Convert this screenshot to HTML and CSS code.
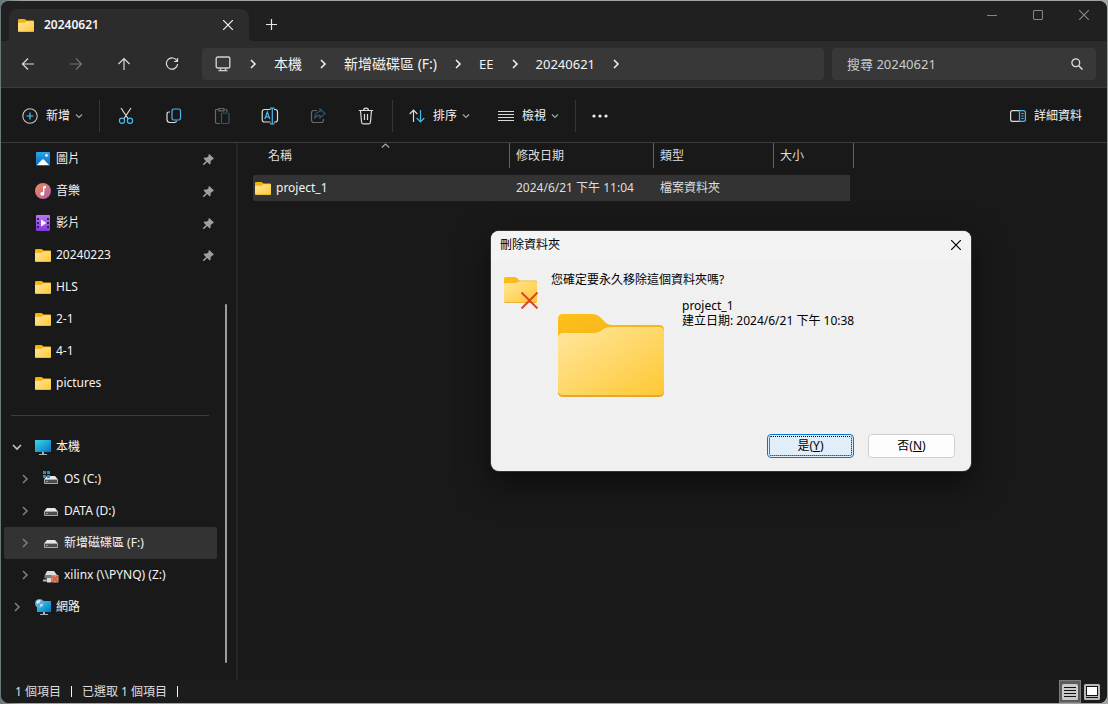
FILE: index.html
```html
<!DOCTYPE html>
<html lang="zh-Hant">
<head>
<meta charset="utf-8">
<title>20240621</title>
<link rel="stylesheet" href="styles.css">
</head>
<body>
<svg class="defs" aria-hidden="true">
  <defs>
    <linearGradient id="gFolder" x1="0" y1="0" x2="1" y2="1"><stop offset="0" stop-color="#ffe79f"/><stop offset="1" stop-color="#ffc833"/></linearGradient>
    <linearGradient id="gTab" x1="0" y1="0" x2="1" y2="1"><stop offset="0" stop-color="#ffc01a"/><stop offset="1" stop-color="#efb020"/></linearGradient>
    <linearGradient id="gScreen" x1="0" y1="0" x2="1" y2="1"><stop offset="0" stop-color="#35dbe8"/><stop offset="1" stop-color="#0a6fc4"/></linearGradient>
    <linearGradient id="gPicture" x1="0" y1="0" x2="0" y2="1"><stop offset="0" stop-color="#2ba4ea"/><stop offset="1" stop-color="#0b66b8"/></linearGradient>
    <linearGradient id="gMusic" x1="0" y1="0" x2="1" y2="1"><stop offset="0" stop-color="#f58c55"/><stop offset="1" stop-color="#a85fb0"/></linearGradient>
    <linearGradient id="gVideo" x1="0" y1="0" x2="0" y2="1"><stop offset="0" stop-color="#b877f2"/><stop offset="1" stop-color="#8038d8"/></linearGradient>
    <symbol id="folder" viewBox="0 0 16 13"><path d="M0 4V1.2Q0 0 1.2 0H6Q6.800 0 7.400.6L8.500 1.600H15Q16 1.600 16 2.600V5H0z" fill="#f5b20c"/><path d="M0 4.600Q0 3.800.8 3.800H6.500L8.500 2.200H15.200Q16 2.200 16 3V12Q16 13 15 13H1Q0 13 0 12z" fill="url(#gFolder)"/><path d="M0 11.800Q0 12.600 1 12.600H15Q16 12.600 16 11.800V12.200Q16 13 15 13H1Q0 13 0 12.200z" fill="#e0a12a"/></symbol>
    <symbol id="big-folder" viewBox="0 0 106 83"><path d="M0 22V5Q0 0 5 0H34Q39 0 42.500 3.500L48 9Q50.500 11 54 11H101Q106 11 106 16V30H0z" fill="url(#gTab)"/><path d="M0 25Q0 19 5 19H34Q40 19 44 16L47 14Q49 13 53 13H101Q106 13 106 18V78Q106 83 101 83H5Q0 83 0 78z" fill="#e5a82d"/><path d="M0 24Q0 19 5 19H34Q40 19 44 16L47 14Q49 13 53 13H101Q106 13 106 18V76Q106 81 101 81H5Q0 81 0 76z" fill="url(#gFolder)"/></symbol>
    <symbol id="drive" viewBox="0 0 16 16"><path d="M4 5H12L15 8.500H1z" fill="#e8e8e8"/><rect x="1" y="8" width="14" height="5" rx=".8" fill="#a6a8aa"/><rect x="2" y="9" width="12" height="3" fill="#4a4d4f"/><rect x="3" y="10" width="2" height="1" fill="#36e04c"/></symbol>
    <symbol id="pin" viewBox="0 0 11 11"><path d="M6.200 0 11 4.600 9.800 5.600 9.200 5.400 7.600 7.200V9.600L6.700 10.400 4.200 8 1 11H0V10L3 6.900.6 4.500 1.500 3.500H4L5.700 1.900 5.300 1z" fill="#98a1a8"/></symbol>
    <symbol id="crumb" viewBox="0 0 8 10"><path d="M2 1 6 5 2 9" fill="none" stroke="currentColor" stroke-width="1.500"/></symbol>
    <symbol id="down" viewBox="0 0 8 6"><path d="M1 1.500 4 4.500 7 1.500" fill="none" stroke="#a4a4a4" stroke-width="1.200"/></symbol>
    <symbol id="x" viewBox="0 0 10 10"><path d="M0 0 10 10M10 0 0 10" fill="none" stroke="currentColor" stroke-width="1.200"/></symbol>
    <symbol id="monitor" viewBox="0 0 16 16"><rect x="0" y="1" width="16" height="12" rx="0" fill="url(#gScreen)"/><path d="M7 13H9V15H12V16H4V15H7z" fill="#aab4be"/></symbol>
  </defs>
</svg>
<div class="window">
  <header class="titlebar">
    <div class="tab">
      <svg class="folder-icon"><use href="#folder"/></svg>
      <span class="tab-title">20240621</span>
      <button class="tab-close" aria-label="關閉索引標籤"><svg width="10" height="10"><use href="#x"/></svg></button>
    </div>
    <button class="new-tab" aria-label="新增索引標籤"><svg width="11" height="11" viewBox="0 0 11 11"><path d="M5.500 0V11M0 5.500H11" stroke="#e6e6e6" stroke-width="1.200"/></svg></button>
    <div class="window-buttons">
      <button aria-label="最小化"><svg width="10" height="10"><path d="M0 5.500H10" stroke="currentColor"/></svg></button>
      <button aria-label="最大化"><svg width="10" height="10"><rect x=".5" y=".5" width="9" height="9" rx=".5" fill="none" stroke="currentColor"/></svg></button>
      <button aria-label="關閉"><svg width="10" height="10"><use href="#x"/></svg></button>
    </div>
  </header>

  <div class="navbar">
    <div class="nav-buttons">
      <button aria-label="上一頁"><svg width="14" height="14" viewBox="0 0 14 14"><path d="M7 1.500 1.500 7 7 12.500M1.500 7H13" class="line"/></svg></button>
      <button aria-label="下一頁" disabled><svg width="14" height="14" viewBox="0 0 14 14"><path d="M7 1.500 12.500 7 7 12.500M12.500 7H1" class="line"/></svg></button>
      <button aria-label="上一層"><svg width="14" height="14" viewBox="0 0 14 14"><path d="M1.500 7 7 1.500 12.500 7M7 1.500V13" class="line"/></svg></button>
      <button aria-label="重新整理"><svg width="14" height="14" viewBox="0 0 14 14"><path d="M12 4A5.600 5.600 0 1 0 12.600 7M12.500 1V4.500H9" class="line"/></svg></button>
    </div>
    <nav class="address" aria-label="路徑">
      <svg width="16" height="16" viewBox="0 0 16 16"><rect x="1.200" y="1" width="13.600" height="11" rx="1.500" fill="none" stroke="#cfcfcf" stroke-width="1.400"/><path d="M5.500 12V14.500M10.500 12V14.500M3.500 14.700H12.500" stroke="#cfcfcf" stroke-width="1.300"/></svg>
      <svg class="crumb"><use href="#crumb"/></svg>
      <a href="#">本機</a>
      <svg class="crumb"><use href="#crumb"/></svg>
      <a href="#">新增磁碟區 (F:)</a>
      <svg class="crumb"><use href="#crumb"/></svg>
      <a href="#" class="latin">EE</a>
      <svg class="crumb"><use href="#crumb"/></svg>
      <a href="#" class="latin">20240621</a>
      <svg class="crumb"><use href="#crumb"/></svg>
    </nav>
    <div class="search">
      <input type="text" aria-label="搜尋 20240621" placeholder="搜尋 20240621">
      <button aria-label="搜尋"><svg width="12" height="12" viewBox="0 0 12 12"><circle cx="4.800" cy="4.800" r="3.900" fill="none" stroke="#dedede" stroke-width="1.300"/><path d="M7.700 7.700 11.500 11.500" stroke="#dedede" stroke-width="1.500"/></svg></button>
    </div>
  </div>

  <div class="toolbar">
    <button class="tool"><svg width="16" height="16" viewBox="0 0 16 16"><circle cx="8" cy="8" r="7.200" fill="none" stroke="#c8c8c8" stroke-width="1.100"/><path d="M8 4.500V11.500M4.500 8H11.500" stroke="#4cc2ff" stroke-width="1.200"/></svg><span>新增</span><svg class="down"><use href="#down"/></svg></button>
    <span class="divider"></span>
    <div class="icon-tools">
      <button aria-label="剪下"><svg width="16" height="18" viewBox="0 0 16 18"><path d="M3 1 10.300 12M13 1 5.700 12" class="line"/><circle cx="4" cy="13.800" r="2.600" class="blue"/><circle cx="12" cy="13.800" r="2.600" class="blue"/></svg></button>
      <button aria-label="複製"><svg width="16" height="16" viewBox="0 0 16 16"><path d="M4 4H3Q1 4 1 6V11.500Q1 14.500 4 14.500H8.500Q10.300 14.500 10.500 12.800" class="line"/><rect x="6" y="1" width="8.500" height="11" rx="1.800" class="blue"/></svg></button>
      <button aria-label="貼上" disabled><svg width="16" height="18" viewBox="0 0 16 18"><path d="M5 2.500H2.500Q1.500 2.500 1.500 3.500V15Q1.500 16.500 3 16.500H6M11 2.500H12Q13 2.500 13 3.500V5M5 1.500H10V3.800H5z" class="line"/><rect x="7.500" y="6" width="7.500" height="10.500" rx="1" class="blue"/></svg></button>
      <button aria-label="重新命名"><svg width="18" height="18" viewBox="0 0 18 18"><path d="M9.500 2.500H3.500Q1.200 2.500 1.200 5V12.500Q1.200 15 3.500 15H9.500M13 2.500H14.500Q16.500 2.500 16.500 5V12.500Q16.500 15 14.500 15H13" class="line"/><path d="M3.800 12 6.300 5 8.800 12M4.600 9.800H8M9 1.200H13.500M9 16.800H13.500M11.300 1.200V16.800" class="blue"/></svg></button>
      <button aria-label="共用" disabled><svg width="16" height="16" viewBox="0 0 16 16"><path d="M7 2.500H4Q1.500 2.500 1.500 5V12Q1.500 14.500 4 14.500H11Q13.500 14.500 13.500 12V11" class="line"/><path d="M10 1 15 5.500 10 10V7.500Q6.500 7 4.500 10.500 5 4 10 3.500z" class="blue"/></svg></button>
      <button aria-label="刪除"><svg width="16" height="18" viewBox="0 0 16 18"><path d="M.8 3.500H15.200M2.500 3.500 3.600 15.500Q3.800 16.800 5 16.800H11Q12.200 16.800 12.400 15.500L13.500 3.500M5.500 3.300Q5.700 1.200 8 1.200T10.500 3.300M6.500 7V13M9.500 7V13" class="line"/></svg></button>
    </div>
    <span class="divider"></span>
    <button class="tool sort"><svg width="16" height="14" viewBox="0 0 16 14"><path d="M4.500 13V1M.7 5 4.500 1 8.300 5" class="line"/><path d="M11.500 1V13M7.700 9 11.500 13 15.300 9" class="blue"/></svg><span>排序</span><svg class="down"><use href="#down"/></svg></button>
    <button class="tool view"><svg width="16" height="12" viewBox="0 0 16 12"><path d="M0 1.500H16M0 4.500H16M0 7.500H16M0 10.500H16" stroke="#d8d8d8"/></svg><span>檢視</span><svg class="down"><use href="#down"/></svg></button>
    <span class="divider"></span>
    <button class="more" aria-label="查看更多"><svg width="16" height="4" viewBox="0 0 16 4"><g fill="#f2f2f2"><circle cx="2" cy="2" r="1.600"/><circle cx="8" cy="2" r="1.600"/><circle cx="14" cy="2" r="1.600"/></g></svg></button>
    <button class="tool details"><svg width="16" height="12" viewBox="0 0 16 12"><path d="M9.500.6H2.500Q.6.600.6 2.500V9.500Q.6 11.400 2.500 11.400H9.500" class="line"/><path d="M9.500.6H13.500Q15.400.6 15.400 2.500V9.500Q15.400 11.400 13.500 11.400H9.500zM11.300 3.500H13.700M11.300 6H13.700M11.300 8.500H13.700" class="blue"/></svg><span>詳細資料</span></button>
  </div>

  <main class="content">
    <aside class="sidebar">
      <ul class="tree">
        <li class="item"><svg width="16" height="16" viewBox="0 0 16 16"><rect x="1" y="1" width="14" height="14" rx="1" fill="url(#gPicture)"/><path d="M2 14 7.200 8.500Q8 7.800 8.800 8.500L14 14z" fill="#fff"/><circle cx="11.500" cy="4.500" r="1.400" fill="#d6efff"/></svg><span>圖片</span><svg class="pin"><use href="#pin"/></svg></li>
        <li class="item"><svg width="16" height="16" viewBox="0 0 16 16"><circle cx="8" cy="8" r="8" fill="url(#gMusic)"/><path d="M8 3.500 11 2.800V5L9.300 5.500V10.800A2 1.800 0 1 1 8 9.200z" fill="#fff"/></svg><span>音樂</span><svg class="pin"><use href="#pin"/></svg></li>
        <li class="item"><svg width="16" height="16" viewBox="0 0 16 16"><rect x="1" width="14" height="16" rx="1" fill="url(#gVideo)"/><path d="M6 4.500 11.500 8 6 11.500z" fill="#fff"/><path d="M2 3H4V5H2zM2 7H4V9H2zM2 11H4V13H2zM12 3H14V5H12zM12 7H14V9H12zM12 11H14V13H12z" fill="#3c1a68"/></svg><span>影片</span><svg class="pin"><use href="#pin"/></svg></li>
        <li class="item"><svg class="folder-icon"><use href="#folder"/></svg><span>20240223</span><svg class="pin"><use href="#pin"/></svg></li>
        <li class="item"><svg class="folder-icon"><use href="#folder"/></svg><span>HLS</span></li>
        <li class="item"><svg class="folder-icon"><use href="#folder"/></svg><span>2-1</span></li>
        <li class="item"><svg class="folder-icon"><use href="#folder"/></svg><span>4-1</span></li>
        <li class="item"><svg class="folder-icon"><use href="#folder"/></svg><span>pictures</span></li>
        <li class="rule" role="separator"></li>
        <li class="item branch"><svg class="twist open" viewBox="0 0 10 10"><path d="M1 3 5 7 9 3"/></svg><svg width="16" height="16"><use href="#monitor"/></svg><span>本機</span></li>
        <li class="item branch child"><svg class="twist" viewBox="0 0 10 10"><path d="M3 1 7 5 3 9"/></svg><svg width="16" height="16" viewBox="0 0 16 16"><use href="#drive"/><path d="M0 0H3V3H0zM4 0H7V3H4zM0 4H3V7H0zM4 4H7V7H4z" fill="#1695e0"/></svg><span>OS (C:)</span></li>
        <li class="item branch child"><svg class="twist" viewBox="0 0 10 10"><path d="M3 1 7 5 3 9"/></svg><svg width="16" height="16"><use href="#drive"/></svg><span>DATA (D:)</span></li>
        <li class="item branch child selected"><svg class="twist" viewBox="0 0 10 10"><path d="M3 1 7 5 3 9"/></svg><svg width="16" height="16"><use href="#drive"/></svg><span>新增磁碟區 (F:)</span></li>
        <li class="item branch child"><svg class="twist" viewBox="0 0 10 10"><path d="M3 1 7 5 3 9"/></svg><svg width="16" height="16" viewBox="0 0 16 16"><path d="M4 4H11L14 8H2z" fill="#dcdcdc"/><rect x="1.500" y="8" width="13" height="3.500" fill="#77797b"/><path d="M0 12.500H10V14.500H0z" fill="#b4b4b4"/><path d="M4 11H8V15.500H4z" fill="#dcdcdc"/><rect x="8.500" y="8" width="7" height="7.500" fill="#b9a49c"/><path d="M9.500 9.200 14.600 14.500M14.600 9.200 9.500 14.500" stroke="#ee5a26" stroke-width="2"/></svg><span>xilinx (\\PYNQ) (Z:)</span></li>
        <li class="item branch"><svg class="twist" viewBox="0 0 10 10"><path d="M3 1 7 5 3 9"/></svg><svg width="16" height="16" viewBox="0 0 16 16"><rect x="2" y="2" width="14" height="11" fill="url(#gScreen)"/><path d="M8 13H10V15H13V16H5V15H8z" fill="#aab4be"/><circle cx="4.500" cy="4.500" r="4.500" fill="#5aa9d6"/><path d="M1 3Q3 0 6 1.500L4.500 4 2 5zM5 5.500 8 4.500Q8 7 5.500 8z" fill="#c9ecf7"/></svg><span>網路</span></li>
      </ul>
      <div class="scroll"><div class="thumb"></div></div>
    </aside>
    <section class="files">
      <table class="list">
        <colgroup><col class="c-name"><col class="c-date"><col class="c-type"><col class="c-size"></colgroup>
        <thead><tr>
          <th class="name">名稱<svg class="sorted" width="9" height="5" viewBox="0 0 9 5"><path d="M.8 4.500 4.500 1 8.200 4.500" fill="none" stroke="#a8a8a8" stroke-width="1.200"/></svg></th>
          <th>修改日期</th><th>類型</th><th>大小</th>
        </tr></thead>
        <tbody><tr>
          <td><span class="file"><svg class="folder-icon"><use href="#folder"/></svg><span>project_1</span></span></td>
          <td>2024/6/21 下午 11:04</td><td>檔案資料夾</td><td></td>
        </tr></tbody>
      </table>
    </section>
  </main>

  <footer class="status">
    <span>1 個項目</span><i class="bar"></i><span>已選取 1 個項目</span><i class="bar"></i>
    <div class="modes">
      <button class="active" aria-label="詳細資料檢視"><svg width="16" height="16" viewBox="0 0 16 16"><rect width="16" height="16" rx="1.500" fill="#c9c9c9"/><path d="M2 3.500H14M2 6.500H14M2 9.500H14M2 12.500H14" stroke="#111"/></svg></button>
      <button aria-label="大圖示檢視"><svg width="16" height="16" viewBox="0 0 16 16"><rect width="16" height="16" rx="1.500" fill="#b9b9b9"/><rect x="2.500" y="2.500" width="11" height="9" fill="#fff" stroke="#111"/><path d="M2 13.500H14" stroke="#111"/></svg></button>
    </div>
  </footer>

  <div class="dialog" role="dialog" aria-labelledby="dlg-title">
    <div class="dialog-title"><span id="dlg-title">刪除資料夾</span><button aria-label="關閉對話方塊"><svg width="10" height="10"><use href="#x"/></svg></button></div>
    <div class="dialog-body">
      <svg class="delete-icon" width="34" height="32" viewBox="0 0 34 32"><use href="#big-folder" width="33" height="26"/><path d="M17.500 15.500 33.500 31.500M33.500 15.500 17.500 31.500" stroke="#d8491c" stroke-width="2"/></svg>
      <div class="message">
        <p>您確定要永久移除這個資料夾嗎?</p>
        <div class="target">
          <svg width="106" height="83"><use href="#big-folder"/></svg>
          <div class="facts"><p>project_1</p><p>建立日期: 2024/6/21 下午 10:38</p></div>
        </div>
      </div>
    </div>
    <div class="dialog-actions">
      <button class="default">是(<u>Y</u>)</button>
      <button>否(<u>N</u>)</button>
    </div>
  </div>
</div>
</body>
</html>
```

FILE: styles.css
```css
* { box-sizing: border-box; }
body {
  margin: 0;
  background: linear-gradient(90deg, #66787a, #a2a4a3 2%, #a2a4a3);
  color: #f4f4f4;
  font: 12px/16px "Noto Sans", "Noto Sans CJK TC", sans-serif;
}
button {
  display: flex;
  align-items: center;
  justify-content: center;
  border: 0;
  padding: 0;
  background: none;
  color: inherit;
  font: inherit;
}
svg { display: block; flex: none; }
p, ul { margin: 0; padding: 0; }
.defs { position: absolute; width: 0; height: 0; }
.line { fill: none; stroke: #dcdcdc; stroke-width: 1.2; }
.blue { fill: none; stroke: #4cb8f0; stroke-width: 1.2; }
button:disabled { opacity: .4; }
.folder-icon { width: 16px; height: 13px; }

.window {
  position: relative;
  display: flex;
  flex-direction: column;
  height: calc(100vh - 2px);
  margin: 1px;
  border-radius: 8px;
  overflow: hidden;
  background: #191919;
}

/* Title bar */
.titlebar {
  display: flex;
  align-items: flex-end;
  height: 40px;
  padding-left: 8px;
  background: #202020;
  border-bottom: 1px solid #1d1d1d;
}
.tab {
  position: relative;
  display: flex;
  align-items: center;
  width: 240px;
  height: 32px;
  margin-bottom: -1px;
  padding: 0 16px 0 9px;
  border-radius: 8px 8px 0 0;
  background: #2c2c2c;
}
.tab::before, .tab::after {
  content: "";
  position: absolute;
  bottom: 0;
  width: 4px;
  height: 4px;
}
.tab::before { right: 100%; background: radial-gradient(circle at 0 0, transparent 4px, #2c2c2c 4px); }
.tab::after { left: 100%; background: radial-gradient(circle at 100% 0, transparent 4px, #2c2c2c 4px); }
.tab-title { margin-left: 10px; font-weight: 600; }
.tab-close { margin-left: auto; }
.new-tab { width: 44px; height: 31px; }
.window-buttons { display: flex; align-self: flex-start; margin-left: auto; color: #868686; }
.window-buttons button { width: 46px; height: 28px; }

/* Navigation */
.navbar {
  display: flex;
  align-items: center;
  gap: 8px;
  height: 47px;
  padding: 0 11px 0 3px;
  background: #2c2c2c;
  border-bottom: 1px solid #3b3b3b;
}
.nav-buttons { display: flex; margin-right: -2px; }
.nav-buttons button { width: 48px; height: 32px; }
.address, .search {
  display: flex;
  align-items: center;
  height: 32px;
  border-radius: 4px;
  background: #383838;
}
.address { flex: 1; gap: 17px; padding-left: 13px; font-size: 14px; line-height: 20px; }
.address svg:first-child { margin-right: 1px; }
.address a { color: #f4f4f4; text-decoration: none; white-space: nowrap; }
.address .latin { font-size: 13px; }
.crumb { width: 8px; height: 10px; }
.search { width: 264px; padding: 0 13px 0 15px; }
.search input {
  flex: 1;
  min-width: 0;
  border: 0;
  padding: 0;
  outline: 0;
  background: none;
  color: #f4f4f4;
  font: inherit;
  font-size: 13px;
}
.search input::placeholder { color: #cccccc; opacity: 1; }

/* Command bar */
.toolbar {
  display: flex;
  align-items: center;
  height: 55px;
  padding: 1px 25px 0 21px;
  border-bottom: 1px solid #3b3b3b;
}
.tool { gap: 8px; white-space: nowrap; }
.down { width: 8px; height: 6px; margin-left: -3px; }
.divider { width: 1px; height: 32px; background: #363636; }
.tool + .divider { margin-left: 16px; }
.icon-tools { display: flex; margin: 0 2px; }
.icon-tools button { width: 48px; height: 32px; }
.sort { margin-left: 16px; }
.view { margin-left: 28px; }
.more { width: 48px; height: 32px; }
.details { margin-left: auto; }

/* Content */
.content { display: flex; flex: 1; min-height: 0; }
.sidebar { display: flex; width: 237px; border-right: 2px solid #272727; }
.tree { width: 216px; list-style: none; }
.item {
  display: flex;
  align-items: center;
  gap: 5px;
  height: 32px;
  margin-left: 3px;
  padding: 0 3px 0 31px;
  white-space: nowrap;
}
.pin { width: 11px; height: 11px; margin-left: auto; }
.branch { gap: 6px; padding-left: 8px; }
.child { padding-left: 16px; }
.branch svg + svg { margin-left: 7px; }
.branch span { margin-left: -1px; }
.selected { background: #333333; border-radius: 2px; }
.twist { width: 10px; height: 10px; fill: none; stroke: #7c7c7c; stroke-width: 1.6; }
.open { stroke: #c4c4c4; }
.rule { height: 32px; margin: 0 8px 0 10px; background: linear-gradient(#3c3c3c, #3c3c3c) center / 100% 1px no-repeat; }
.scroll { display: flex; flex: 1; align-items: flex-end; justify-content: center; padding: 0 2px 17px 0; }
.thumb { width: 2px; height: 69%; border-radius: 1px; background: #9c9c9c; }

.files { flex: 1; padding-left: 15px; }
.list { width: 601px; table-layout: fixed; border-spacing: 0; color: #dedede; }
.c-name { width: 257px; }
.c-date { width: 144px; }
.c-type { width: 120px; }
.c-size { width: 80px; }
.list th {
  position: relative;
  height: 25px;
  padding: 0 6px;
  border-right: 1px solid #636363;
  font-weight: 400;
  text-align: left;
}
.list .name { padding-left: 15px; }
.sorted { position: absolute; top: 0; left: 50%; }
.list tbody::before { content: ""; display: block; height: 7px; }
.list td { height: 26px; padding: 0 6px; background: #333333; }
.list td:first-child { padding-left: 2px; border-radius: 2px 0 0 2px; }
.list td:last-child { padding: 0 4px 0 0; background-clip: content-box; }
.file { display: flex; align-items: center; gap: 5px; color: #f4f4f4; }

/* Status bar */
.status {
  display: flex;
  align-items: center;
  gap: 10px;
  height: 23px;
  padding: 0 4px 0 14px;
  background: #1c1c1c;
  color: #dedede;
}
.bar { width: 1px; height: 11px; background: #f4f4f4; }
.modes { display: flex; margin-left: auto; }
.modes button { width: 22px; height: 23px; }
.modes .active { background: #5c5c5c; border: 1px solid #7c7c7c; }

/* Confirmation dialog */
.dialog {
  position: absolute;
  top: 230px;
  left: 490px;
  display: flex;
  flex-direction: column;
  width: 480px;
  min-height: 240px;
  border-radius: 8px;
  overflow: hidden;
  background: #f0f0f0;
  color: #000;
  box-shadow: 0 0 0 1px #343434, 0 12px 32px rgba(0, 0, 0, .55);
}
.dialog-title {
  display: flex;
  align-items: center;
  justify-content: space-between;
  height: 30px;
  padding: 0 10px 2px 9px;
  background: #f3f3f3;
}
.dialog-body { display: flex; gap: 13px; padding: 11px 13px 0; }
.delete-icon { margin-top: 5px; }
.target { display: flex; gap: 18px; padding: 26px 0 0 7px; }
.facts { margin-top: -16px; line-height: 15px; }
.dialog-actions { display: flex; justify-content: flex-end; gap: 14px; margin-top: auto; padding: 0 16px 13px; }
.dialog-actions button {
  width: 87px;
  height: 24px;
  border: 1px solid #d0d0d0;
  border-radius: 4px;
  background: #fdfdfd;
}
.dialog-actions .default {
  border-color: #0078d4;
  background: #e0eef9;
  outline: 1px dotted #000;
  outline-offset: -3px;
}
```
